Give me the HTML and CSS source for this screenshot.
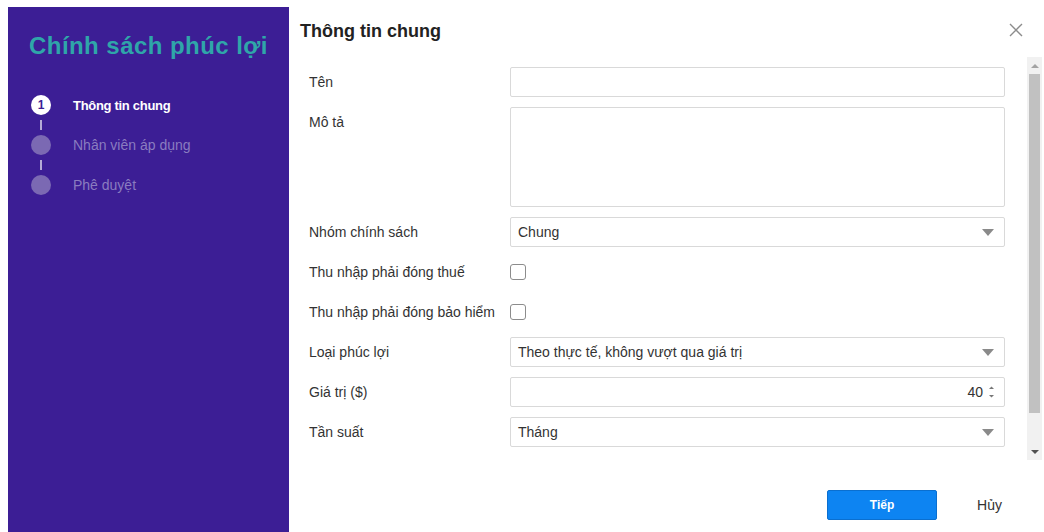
FILE: index.html
```html
<!DOCTYPE html>
<html lang="vi">
<head>
<meta charset="utf-8">
<title>Chính sách phúc lợi</title>
<link rel="stylesheet" href="styles.css">
</head>
<body>
<div class="page">
  <aside class="sidebar">
    <h1 class="side-title">Chính sách phúc lợi</h1>
    <ol class="steps">
      <li class="step active"><span class="dot">1</span><span class="step-label">Thông tin chung</span></li>
      <li class="connector"></li>
      <li class="step"><span class="dot"></span><span class="step-label">Nhân viên áp dụng</span></li>
      <li class="connector"></li>
      <li class="step"><span class="dot"></span><span class="step-label">Phê duyệt</span></li>
    </ol>
  </aside>
  <main class="main">
    <header class="head">
      <h2 class="head-title">Thông tin chung</h2>
      <button class="close" aria-label="Đóng">
        <svg width="14" height="14" viewBox="0 0 14 14"><path d="M1 1L13 13M13 1L1 13" stroke="#8c8c8c" stroke-width="1.4" fill="none"/></svg>
      </button>
    </header>
    <div class="body">
      <div class="scroll">
        <div class="form">
          <div class="row"><label class="lbl">Tên</label><div class="field"><div class="input"></div></div></div>
          <div class="row"><label class="lbl">Mô tả</label><div class="field"><div class="input textarea"></div></div></div>
          <div class="row"><label class="lbl">Nhóm chính sách</label><div class="field"><div class="input select"><span>Chung</span><span class="caret"></span></div></div></div>
          <div class="row"><label class="lbl">Thu nhập phải đóng thuế</label><div class="field check-field"><span class="checkbox"></span></div></div>
          <div class="row"><label class="lbl">Thu nhập phải đóng bảo hiểm</label><div class="field check-field"><span class="checkbox"></span></div></div>
          <div class="row"><label class="lbl">Loại phúc lợi</label><div class="field"><div class="input select"><span>Theo thực tế, không vượt qua giá trị</span><span class="caret"></span></div></div></div>
          <div class="row"><label class="lbl">Giá trị ($)</label><div class="field"><div class="input number"><span class="num">40</span><span class="spin"><svg width="7" height="14" viewBox="0 0 7 14"><path d="M1 4L3.5 1.5L6 4Z" fill="#777"/><path d="M1 10L3.5 12.5L6 10Z" fill="#777"/></svg></span></div></div></div>
          <div class="row"><label class="lbl">Tần suất</label><div class="field"><div class="input select"><span>Tháng</span><span class="caret"></span></div></div></div>
        </div>
      </div>
      <div class="scrollbar">
        <span class="sb-arrow up"></span>
        <span class="sb-track"><span class="sb-thumb"></span></span>
        <span class="sb-arrow down"></span>
      </div>
    </div>
    <footer class="foot">
      <button class="btn-primary">Tiếp</button>
      <button class="btn-link">Hủy</button>
    </footer>
  </main>
</div>
</body>
</html>
```
FILE: styles.css
```css
* { box-sizing: border-box; }
html, body { margin: 0; padding: 0; height: 100%; }
body {
  font-family: "Liberation Sans", Arial, sans-serif;
  background: #fff;
  color: #333;
  overflow: hidden;
}
.page {
  display: flex;
  height: 532px;
}
.sidebar {
  width: 281px;
  flex: none;
  margin: 7px 0 0 8px;
  background: #3c1e95;
  padding: 24px 0 0 21px;
}
.side-title {
  margin: 0;
  font-size: 24px;
  line-height: 30px;
  font-weight: bold;
  color: #2fa6a9;
  letter-spacing: 0.45px;
}
.steps {
  list-style: none;
  margin: 34px 0 0 0;
  padding: 0 0 0 2px;
}
.step {
  display: flex;
  align-items: center;
  height: 20px;
}
.dot {
  width: 20px;
  height: 20px;
  border-radius: 50%;
  background: #7b69b3;
  flex: none;
  display: flex;
  align-items: center;
  justify-content: center;
  font-size: 12px;
  font-weight: bold;
  color: #3c1e95;
}
.step.active .dot {
  background: #fff;
}
.step-label {
  margin-left: 22px;
  font-size: 14px;
  color: #8a7cc0;
}
.step.active .step-label {
  color: #fff;
  font-weight: bold;
  font-size: 13px;
  letter-spacing: -0.3px;
}
.connector {
  width: 2px;
  height: 20px;
  padding: 5px 0;
  margin-left: 9px;
  background: #b4aad6;
  background-clip: content-box;
}
.main {
  flex: 1;
  display: flex;
  flex-direction: column;
  min-width: 0;
}
.head {
  display: flex;
  align-items: center;
  justify-content: space-between;
  height: 57px;
  padding: 6px 21px 0 11px;
}
.head-title {
  margin: 0;
  font-size: 18px;
  font-weight: bold;
  color: #222;
}
.close {
  border: 0;
  background: none;
  padding: 0;
  width: 14px;
  height: 14px;
  display: flex;
  margin-top: -4px;
}
.body {
  display: flex;
  height: 403px;
  padding-right: 2px;
}
.scroll {
  flex: 1;
  overflow: hidden;
  padding: 10px 22px 0 20px;
}
.row {
  display: flex;
  align-items: flex-start;
  margin-bottom: 10px;
}
.lbl {
  width: 201px;
  flex: none;
  font-size: 14px;
  line-height: 30px;
  color: #333;
}
.field {
  flex: 1;
  min-height: 30px;
}
.input {
  height: 30px;
  border: 1px solid #d9d9d9;
  border-radius: 2px;
  background: #fff;
  display: flex;
  align-items: center;
  padding: 0 8px 0 7px;
  font-size: 14px;
  color: #333;
}
.textarea { height: 100px; }
.select { justify-content: space-between; }
.caret {
  width: 0;
  height: 0;
  border-left: 6px solid transparent;
  border-right: 6px solid transparent;
  border-top: 7px solid #8a8a8a;
  margin-right: 2px;
}
.number { justify-content: flex-end; }
.num { margin-right: 5px; }
.spin { display: flex; margin-right: 1px; }
.check-field { display: flex; align-items: center; height: 30px; }
.checkbox {
  width: 16px;
  height: 16px;
  border: 1px solid #8c8c8c;
  border-radius: 3px;
  background: #fff;
}
.scrollbar {
  width: 15px;
  flex: none;
  background: #f1f1f1;
  display: flex;
  flex-direction: column;
}
.sb-arrow {
  height: 17px;
  flex: none;
  display: flex;
  align-items: center;
  justify-content: center;
}
.sb-arrow::before {
  content: "";
  border-left: 4px solid transparent;
  border-right: 4px solid transparent;
}
.sb-arrow.up::before { border-bottom: 4px solid #a3a3a3; }
.sb-arrow.down::before { border-top: 4px solid #505050; }
.sb-track {
  flex: 1;
  padding: 0 2px;
  display: flex;
  flex-direction: column;
}
.sb-thumb {
  height: 339px;
  background: #c1c1c1;
}
.foot {
  display: flex;
  align-items: center;
  justify-content: flex-end;
  padding: 30px 15px 0 0;
}
.btn-primary {
  width: 110px;
  height: 30px;
  background: #0d84f2;
  border: 1px solid #0a6fd0;
  border-radius: 2px;
  color: #fff;
  font-family: "Liberation Sans", Arial, sans-serif;
  font-weight: bold;
  font-size: 12px;
  padding: 0;
}
.btn-link {
  width: 92px;
  height: 30px;
  background: none;
  border: 0;
  padding: 0 0 0 13px;
  font-family: "Liberation Sans", Arial, sans-serif;
  font-size: 14px;
  color: #333;
}
```
